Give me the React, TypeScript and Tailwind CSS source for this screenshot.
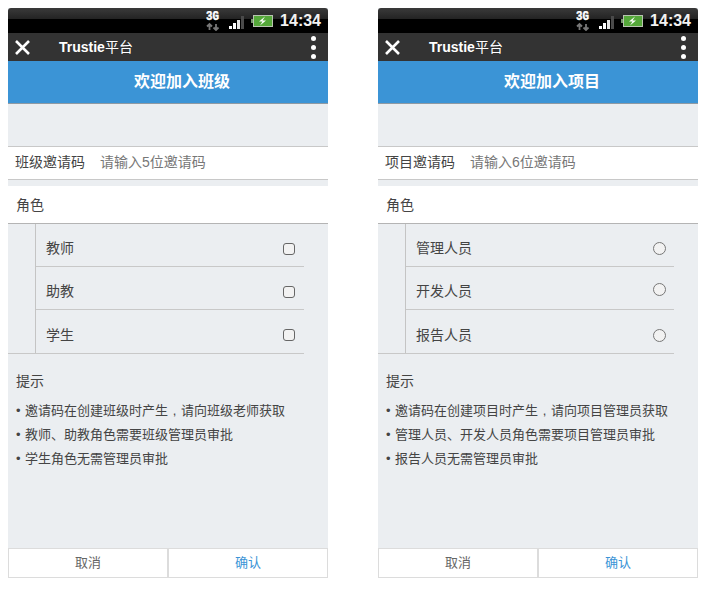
const font = { fontFamily: '"Liberation Sans", "Noto Sans CJK SC", sans-serif' };

function StatusBar() {
  return (
    <div className="flex h-[25px] items-center justify-end rounded-t-[3px] bg-[linear-gradient(#3a3a3a_0%,#242424_42%,#000_46%,#000_100%)] pr-[7px]">
      <svg width="14" height="20" viewBox="0 0 14 20" className="mr-[9px] mt-[1px]">
        <text x="0" y="9" fill="#fff" fontSize="12" fontWeight="700" fontFamily="Liberation Mono" stroke="#fff" strokeWidth="0.400" textLength="13" lengthAdjust="spacingAndGlyphs">3G</text>
        <path d="M3.500 13v6M1 15.500l2.500-2.500 2.500 2.500M10 13v6M7.500 16.500l2.500 2.500 2.500-2.500" stroke="#777" strokeWidth="1.800" fill="none" />
      </svg>
      <svg width="16" height="14" viewBox="0 0 16 14" className="mr-[6px] mt-[5px]">
        <rect x="0" y="10" width="3" height="3" fill="#fff" />
        <rect x="4" y="7" width="3" height="6" fill="#fff" />
        <rect x="8" y="4" width="3" height="9" fill="#e4e4e4" />
        <rect x="12" y="0" width="3" height="13" fill="#4a4a4a" />
      </svg>
      <svg width="22" height="12" viewBox="0 0 22 12" className="mr-[7px] mt-[1px]">
        <rect x="0" y="4" width="2" height="4" fill="#7a9a70" />
        <rect x="2.500" y="0.500" width="19" height="11" fill="#55a83a" stroke="#b8c4b0" />
        <path d="M14 1.500l-6 5h3.500l-2.500 4 6-5h-3.500z" fill="#fff" />
      </svg>
      <span className="text-[16px] font-bold leading-none text-[#f2f2f2]" style={{ fontFamily: '"Liberation Sans", sans-serif' }}>14:34</span>
    </div>
  );
}

function Toolbar() {
  return (
    <div className="flex h-[28px] items-center bg-[#333333]">
      <svg width="15" height="15" viewBox="0 0 15 15" className="ml-[7px]">
        <path d="M1 1l13 13M14 1l-13 13" stroke="#fff" strokeWidth="2.600" />
      </svg>
      <span className="ml-[29px] text-[14px] font-bold text-white">
        Trustie<span className="font-normal">平台</span>
      </span>
      <div className="ml-auto mr-[12px] flex flex-col gap-[4px]">
        <div className="h-[5px] w-[5px] rounded-full bg-white" />
        <div className="h-[5px] w-[5px] rounded-full bg-white" />
        <div className="h-[5px] w-[5px] rounded-full bg-white" />
      </div>
    </div>
  );
}

type PhoneProps = {
  title: string;
  codeLabel: string;
  placeholder: string;
  roles: string[];
  round: boolean;
  tips: string[];
};

function Phone({ title, codeLabel, placeholder, roles, round, tips }: PhoneProps) {
  return (
    <div className="flex h-[570px] w-[320px] flex-col bg-[#ebeef1]">
      <StatusBar />
      <Toolbar />
      <div className="flex h-[43px] items-center justify-center border-b border-[#8f9aa3] bg-[#3b94d6] pl-[28px] text-[16px] font-bold text-white">
        {title}
      </div>
      <div className="mt-[42px] flex h-[34px] items-center border-y border-[#c8c8c8] bg-white pb-[2px] pl-[7px] text-[14px]">
        <span className="text-[#444]">{codeLabel}</span>
        <span className="ml-[15px] text-[#777]">{placeholder}</span>
      </div>
      <div className="mt-[6px] flex h-[38px] items-center border-b border-[#b4b4b4] bg-white pl-[8px] pt-[1px] text-[14px] text-[#444]">
        角色
      </div>
      <div className="w-[296px] border-b border-[#c8c8c8]">
        <div className="ml-[27px] border-l border-[#c4c4c4]">
          {roles.map((role, i) => (
            <div
              key={role}
              className={`flex h-[43px] items-center pl-[10px] pt-[7px] text-[14px] text-[#444] ${i < 2 ? "border-b border-[#c8c8c8]" : ""} ${round ? "pr-[8px]" : "pr-[9px]"}`}
            >
              {role}
              {round ? (
                <div className={`ml-auto h-[13px] w-[13px] rounded-full border border-[#777] bg-[#f2f2f2] ${i === 1 ? "mb-[4px]" : ""}`} />
              ) : (
                <div className="ml-auto h-[12px] w-[12px] rounded-[3px] border border-[#666] bg-[#f2f2f2]" />
              )}
            </div>
          ))}
        </div>
      </div>
      <div className="pl-[8px] pt-[17px] text-[14px] leading-[20px] text-[#444]">提示</div>
      <div className="flex flex-col gap-[4px] pl-[8px] pt-[10px] text-[13px] leading-[20px] text-[#444]">
        {tips.map((tip) => {
          const [head, tail] = tip.split("，");
          return (
            <div key={tip} className="flex">
              <span className="w-[9px]">•</span>
              <span>
                {head}
                {tail && <span className="inline-block w-[13px] text-center">,</span>}
                {tail}
              </span>
            </div>
          );
        })}
      </div>
      <div className="mt-auto flex h-[30px] text-[13px]">
        <div className="flex flex-1 items-center justify-center border border-[#dcdcdc] bg-white text-[#666]">取消</div>
        <div className="flex flex-1 items-center justify-center border border-[#dcdcdc] bg-white text-[#3b94d6]">确认</div>
      </div>
    </div>
  );
}

export default function App() {
  return (
    <div className="flex h-[591px] w-[717px] gap-[50px] bg-white pl-[8px] pt-[8px]" style={font}>
      <Phone
        title="欢迎加入班级"
        codeLabel="班级邀请码"
        placeholder="请输入5位邀请码"
        roles={["教师", "助教", "学生"]}
        round={false}
        tips={["邀请码在创建班级时产生，请向班级老师获取", "教师、助教角色需要班级管理员审批", "学生角色无需管理员审批"]}
      />
      <Phone
        title="欢迎加入项目"
        codeLabel="项目邀请码"
        placeholder="请输入6位邀请码"
        roles={["管理人员", "开发人员", "报告人员"]}
        round
        tips={["邀请码在创建项目时产生，请向项目管理员获取", "管理人员、开发人员角色需要项目管理员审批", "报告人员无需管理员审批"]}
      />
    </div>
  );
}
